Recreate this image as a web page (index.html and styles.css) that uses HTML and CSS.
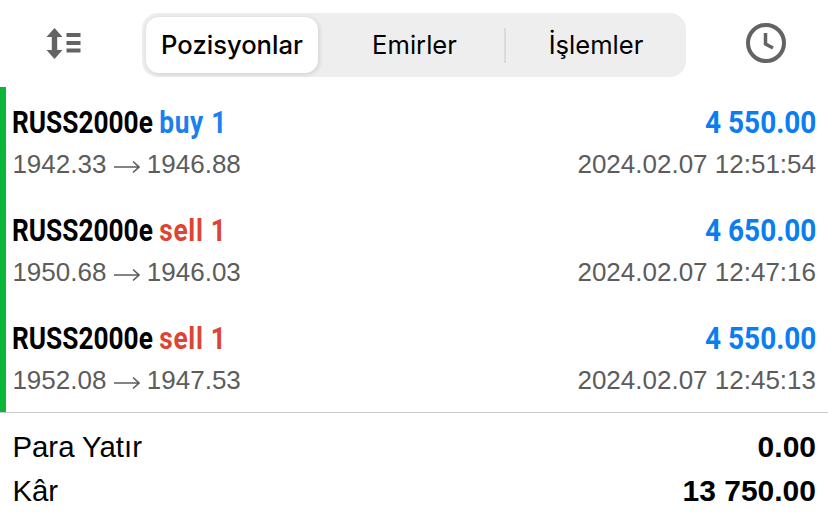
FILE: index.html
```html
<!DOCTYPE html>
<html lang="tr">
<head>
<meta charset="UTF-8">
<meta name="viewport" content="width=device-width, initial-scale=1.0">
<title>Geçmiş</title>
<link rel="stylesheet" href="styles.css">
</head>
<body>

<header class="toolbar">
    <button class="icon-btn sort-btn" aria-label="Sırala">
        <svg width="38" height="34" viewBox="0 0 38 34">
            <path d="M9.5 1 L17.5 10 H12.2 V23 H17.5 L9.5 32 L1.5 23 H6.8 V10 H1.5 Z" fill="#636363"/>
            <rect x="21.5" y="6" width="14" height="4" fill="#636363"/>
            <rect x="21.5" y="14" width="14" height="4" fill="#636363"/>
            <rect x="21.5" y="21.5" width="14" height="4" fill="#636363"/>
        </svg>
    </button>
    <div class="tabs">
        <div class="tab tab-active">Pozisyonlar</div>
        <div class="tab tab-mid">Emirler</div>
        <div class="tab tab-last">İşlemler</div>
    </div>
    <button class="icon-btn clock-btn" aria-label="Geçmiş">
        <svg width="42" height="42" viewBox="0 0 42 42">
            <circle cx="21" cy="21" r="18" fill="none" stroke="#636363" stroke-width="4"/>
            <path d="M20.5 11 V22 L28 26" fill="none" stroke="#636363" stroke-width="3.5"/>
        </svg>
    </button>
</header>

<section class="deals">
    <div class="deal">
        <div class="line">
            <span class="title">RUSS2000e <span class="buy">buy 1</span></span>
            <span class="profit">4 550.00</span>
        </div>
        <div class="line sub">
            <span>1942.33 <svg class="arrow" width="26" height="14" viewBox="0 0 26 14"><path d="M0 7 H25 M19 1.5 L25 7 L19 12.5" fill="none" stroke="#5c5c5c" stroke-width="1.6"/></svg> 1946.88</span>
            <span>2024.02.07 12:51:54</span>
        </div>
    </div>
    <div class="deal">
        <div class="line">
            <span class="title">RUSS2000e <span class="sell">sell 1</span></span>
            <span class="profit">4 650.00</span>
        </div>
        <div class="line sub">
            <span>1950.68 <svg class="arrow" width="26" height="14" viewBox="0 0 26 14"><path d="M0 7 H25 M19 1.5 L25 7 L19 12.5" fill="none" stroke="#5c5c5c" stroke-width="1.6"/></svg> 1946.03</span>
            <span>2024.02.07 12:47:16</span>
        </div>
    </div>
    <div class="deal">
        <div class="line">
            <span class="title">RUSS2000e <span class="sell">sell 1</span></span>
            <span class="profit">4 550.00</span>
        </div>
        <div class="line sub">
            <span>1952.08 <svg class="arrow" width="26" height="14" viewBox="0 0 26 14"><path d="M0 7 H25 M19 1.5 L25 7 L19 12.5" fill="none" stroke="#5c5c5c" stroke-width="1.6"/></svg> 1947.53</span>
            <span>2024.02.07 12:45:13</span>
        </div>
    </div>
</section>

<footer class="summary">
    <div class="line total">
        <span>Para Yatır</span>
        <span class="amount">0.00</span>
    </div>
    <div class="line total">
        <span>Kâr</span>
        <span class="amount">13 750.00</span>
    </div>
</footer>

</body>
</html>
```

FILE: styles.css
```css
html, body {
    height: 100%;
}
body {
    margin: 0;
    background-color: #ffffff;
    color: #000000;
    font-family: "Liberation Sans", Arial, sans-serif;
    overflow: hidden;
}
.toolbar {
    display: flex;
    align-items: center;
    height: 87px;
}
.icon-btn {
    display: flex;
    align-items: center;
    justify-content: center;
    padding: 0;
    border: none;
    background: none;
}
.sort-btn {
    width: 142px;
    margin-top: 1px;
    padding-right: 15px;
    box-sizing: border-box;
}
.clock-btn {
    width: 142px;
    margin-bottom: 1px;
    padding-left: 17px;
    box-sizing: border-box;
}
.tabs {
    display: flex;
    width: 544px;
    height: 64px;
    margin-top: 3px;
    padding: 4px;
    box-sizing: border-box;
    background-color: #eeeeee;
    border-radius: 16px;
}
.tab {
    display: flex;
    align-items: center;
    justify-content: center;
    box-sizing: border-box;
    padding-bottom: 2px;
    font-family: Inter, "Liberation Sans", sans-serif;
    font-size: 25.6px;
    color: #000000;
}
.tab-active {
    width: 172px;
    background-color: #ffffff;
    border-radius: 13px;
    box-shadow: 1px 1px 5px rgba(0, 0, 0, 0.14);
    font-weight: 500;
}
.tab-mid {
    width: 187px;
    padding-left: 6px;
}
.tab-last {
    flex: 1;
    position: relative;
    padding-left: 5px;
}
.tab-last::before {
    content: "";
    position: absolute;
    left: -1px;
    top: 11px;
    height: 35px;
    width: 2px;
    background-color: #dadada;
}
.deals {
    height: 325px;
    border-left: 6px solid #0ab53a;
    box-sizing: border-box;
}
.deal {
    height: 108px;
    padding: 17px 12px 0 6.4px;
    box-sizing: border-box;
}
.line {
    display: flex;
    justify-content: space-between;
    align-items: baseline;
}
/* no condensed family installed, so squeeze Roboto */
.title, .profit {
    display: inline-block;
    font-family: Roboto, sans-serif;
    font-size: 32px;
    line-height: 36px;
    font-weight: 700;
}
.title {
    transform: scaleX(0.82);
    transform-origin: left center;
}
.profit {
    color: #0a7df0;
    transform: scaleX(0.874);
    transform-origin: right center;
}
.buy {
    color: #1a80ee;
    font-weight: 700;
    letter-spacing: 0.8px;
}
.sell {
    color: #dd4433;
    font-weight: 700;
    letter-spacing: 0.8px;
}
.sub {
    margin-top: 9px;
    font-size: 26px;
    line-height: 30px;
    color: #5c5c5c;
}
.arrow {
    vertical-align: -1px;
}
.summary {
    border-top: 1px solid #c8c8c8;
    padding: 12px 12px 0 12.4px;
}
.total {
    font-size: 29.4px;
    line-height: 44px;
}
.amount {
    font-size: 30px;
    font-weight: 700;
}
```
